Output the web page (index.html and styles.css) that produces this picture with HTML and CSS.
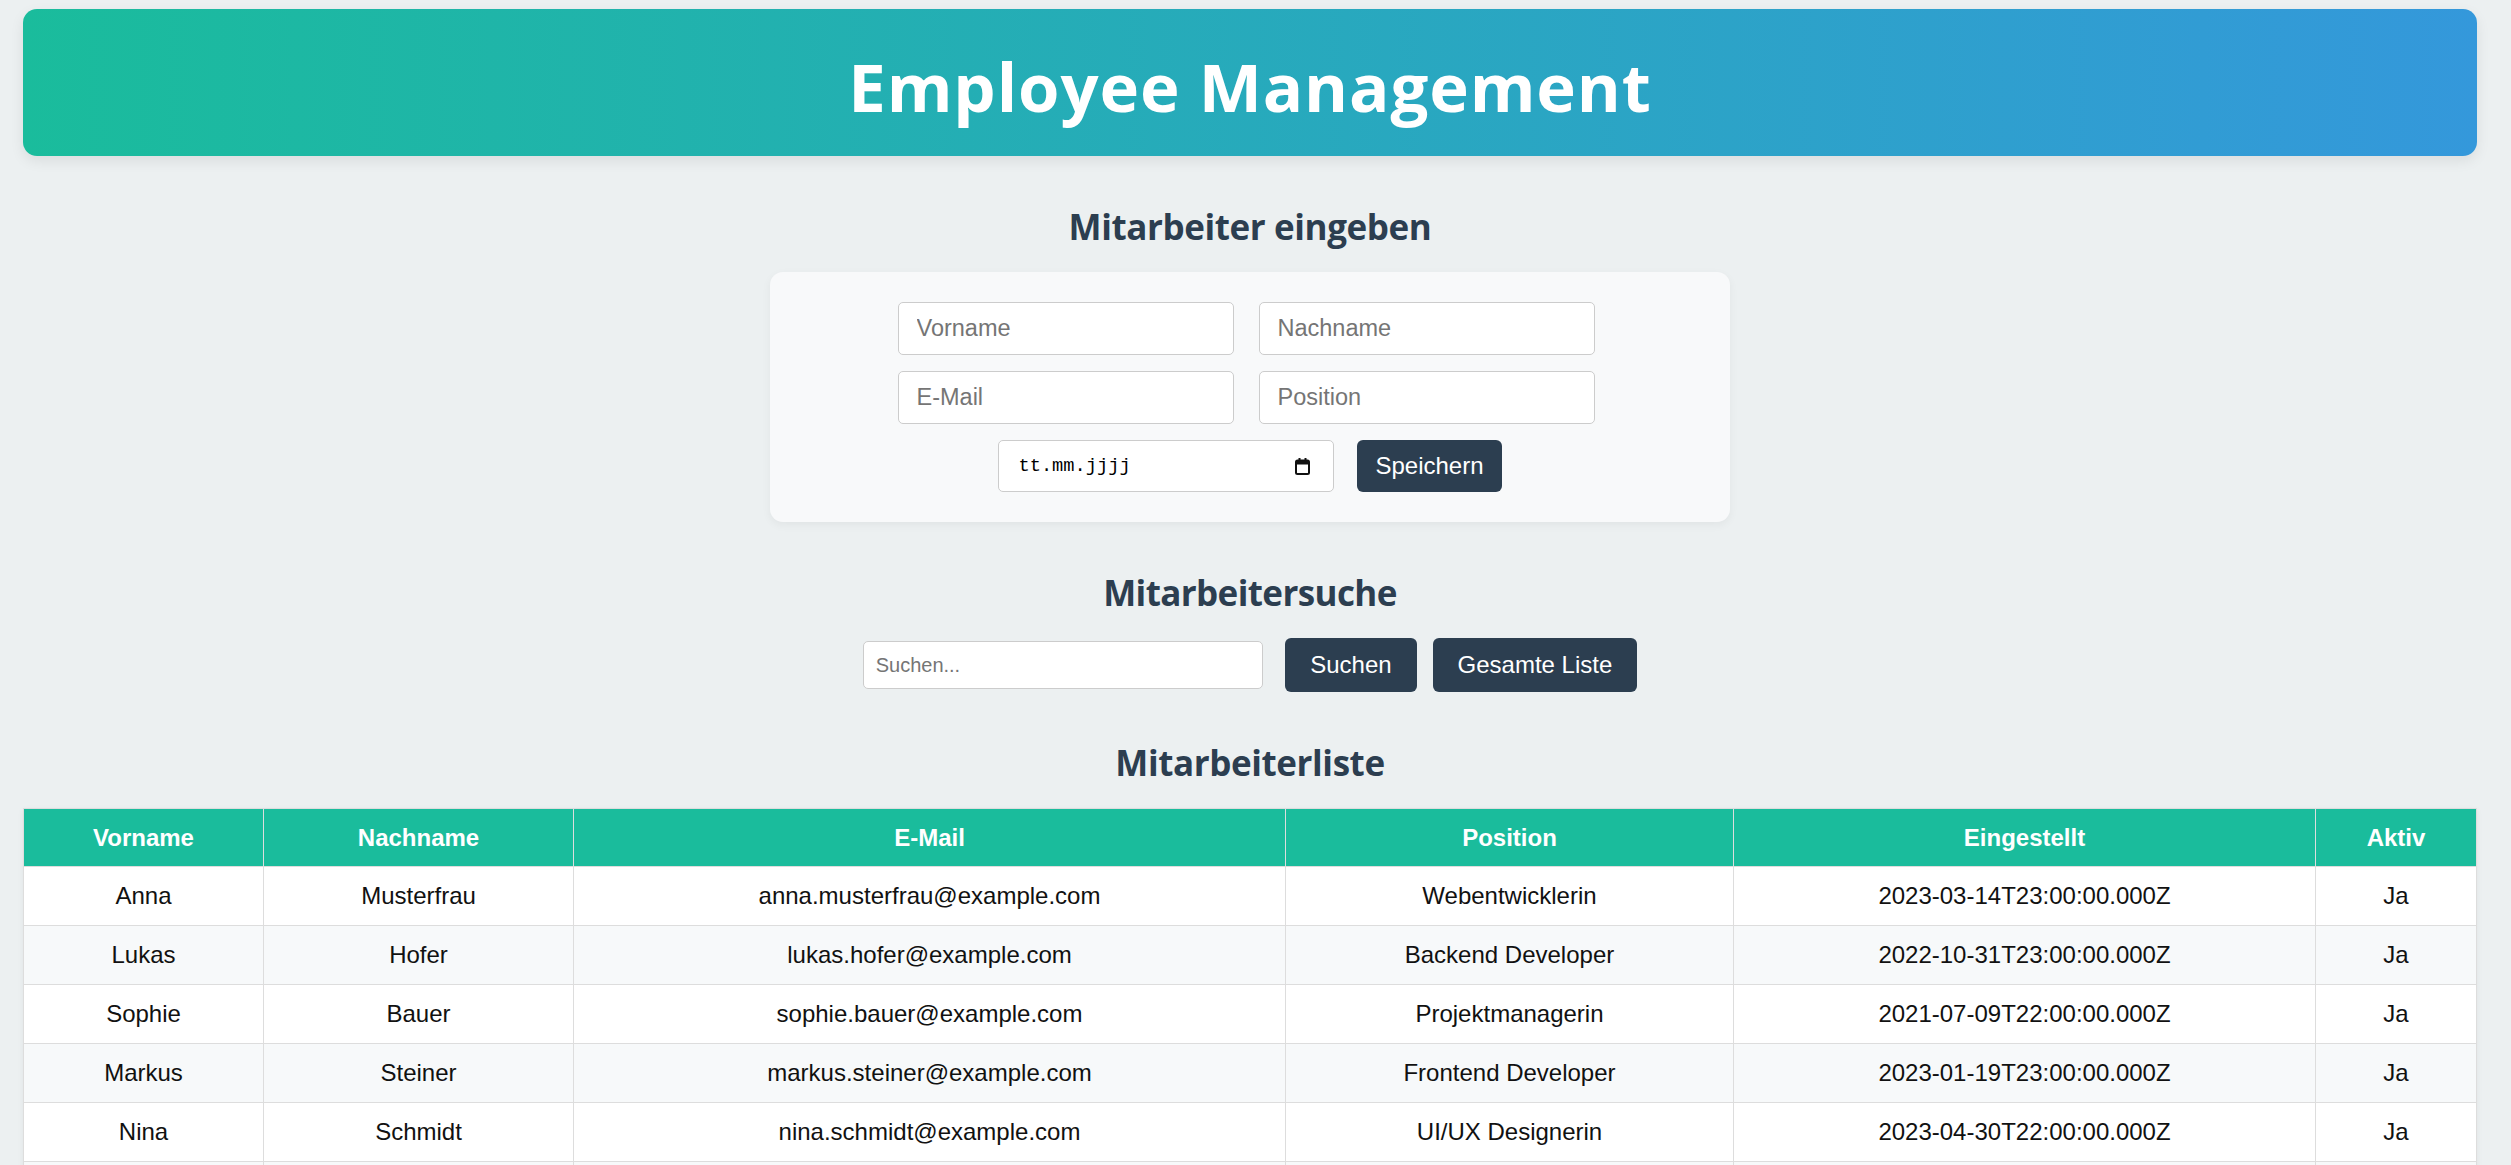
FILE: index.html
```html
<!DOCTYPE html>
<html lang="de">
<head>
<meta charset="utf-8">
<title>Employee Management</title>
<link rel="stylesheet" href="styles.css">
</head>
<body>
<div class="app">
  <header class="banner">
    <h1 class="banner-title">Employee Management</h1>
  </header>

  <section class="section">
    <h2 class="section-title">Mitarbeiter eingeben</h2>
    <form class="card">
      <div class="form-row form-row--pair">
        <input class="field" type="text" placeholder="Vorname">
        <input class="field" type="text" placeholder="Nachname">
      </div>
      <div class="form-row form-row--pair">
        <input class="field" type="text" placeholder="E-Mail">
        <input class="field" type="text" placeholder="Position">
      </div>
      <div class="form-row">
        <div class="date-field">
          <span class="date-text">tt.mm.jjjj</span>
          <svg class="date-icon" width="15" height="17" viewBox="0 0 15 17" aria-hidden="true">
            <rect x="1" y="2.5" width="13" height="13.5" rx="1.5" fill="none" stroke="#111" stroke-width="2"/>
            <rect x="1" y="2.5" width="13" height="4" fill="#111"/>
            <rect x="3.5" y="0" width="2" height="3" fill="#111"/>
            <rect x="9.5" y="0" width="2" height="3" fill="#111"/>
          </svg>
        </div>
        <button class="btn btn--save" type="button">Speichern</button>
      </div>
    </form>
  </section>

  <section class="section">
    <h2 class="section-title section-title--search">Mitarbeitersuche</h2>
    <div class="search-row">
      <input class="field field--search" type="text" placeholder="Suchen...">
      <button class="btn btn--search" type="button">Suchen</button>
      <button class="btn btn--search" type="button">Gesamte Liste</button>
    </div>
  </section>

  <section class="section">
    <h2 class="section-title section-title--list">Mitarbeiterliste</h2>
    <table class="staff-table">
      <colgroup>
        <col class="col-first">
        <col class="col-last">
        <col class="col-mail">
        <col class="col-pos">
        <col class="col-date">
        <col class="col-active">
      </colgroup>
      <thead>
        <tr><th>Vorname</th><th>Nachname</th><th>E-Mail</th><th>Position</th><th>Eingestellt</th><th>Aktiv</th></tr>
      </thead>
      <tbody>
        <tr><td>Anna</td><td>Musterfrau</td><td>anna.musterfrau@example.com</td><td>Webentwicklerin</td><td>2023-03-14T23:00:00.000Z</td><td>Ja</td></tr>
        <tr><td>Lukas</td><td>Hofer</td><td>lukas.hofer@example.com</td><td>Backend Developer</td><td>2022-10-31T23:00:00.000Z</td><td>Ja</td></tr>
        <tr><td>Sophie</td><td>Bauer</td><td>sophie.bauer@example.com</td><td>Projektmanagerin</td><td>2021-07-09T22:00:00.000Z</td><td>Ja</td></tr>
        <tr><td>Markus</td><td>Steiner</td><td>markus.steiner@example.com</td><td>Frontend Developer</td><td>2023-01-19T23:00:00.000Z</td><td>Ja</td></tr>
        <tr><td>Nina</td><td>Schmidt</td><td>nina.schmidt@example.com</td><td>UI/UX Designerin</td><td>2023-04-30T22:00:00.000Z</td><td>Ja</td></tr>
        <tr class="row-empty"><td></td><td></td><td></td><td></td><td></td><td></td></tr>
      </tbody>
    </table>
  </section>
</div>
</body>
</html>
```

FILE: styles.css
```css
html {
  overflow: hidden;
}

body {
  margin: 0;
  background: #ecf0f1;
  font-family: "Liberation Sans", Arial, sans-serif;
  color: #111;
}

.app {
  padding: 9px 34px 40px 23px;
}

.banner {
  background: linear-gradient(90deg, #1abc9c 0%, #3498db 100%);
  border-radius: 14px;
  box-shadow: 0 5px 14px rgba(0, 0, 0, 0.08);
  padding: 44px 0 36px;
  text-align: center;
}

.banner-title {
  margin: 0;
  font-family: "Open Sans", "Noto Sans", sans-serif;
  font-weight: 700;
  font-size: 67px;
  line-height: 67px;
  letter-spacing: 0.9px;
  color: #ffffff;
}

.section {
  display: flex;
  flex-direction: column;
  align-items: center;
}

.section-title {
  margin: 52.5px 0 28.5px;
  font-family: "Open Sans", "Noto Sans", sans-serif;
  font-weight: 700;
  font-size: 35px;
  line-height: 35px;
  letter-spacing: -0.4px;
  color: #2c3e50;
}

.section-title--search {
  letter-spacing: -0.6px;
}

.card {
  width: 960px;
  box-sizing: border-box;
  padding: 30px 0;
  background: #f8f9fa;
  border-radius: 13px;
  box-shadow: 0 3px 10px rgba(0, 0, 0, 0.05);
  display: flex;
  flex-direction: column;
  gap: 16px;
}

.form-row {
  display: flex;
  justify-content: center;
  align-items: center;
  gap: 23px;
}

.form-row--pair {
  gap: 25px;
  padding-right: 8px;
}

.field {
  width: 336px;
  height: 53px;
  box-sizing: border-box;
  padding: 0 18px;
  border: 1px solid #cccccc;
  border-radius: 5px;
  background: #ffffff;
  font-family: "Liberation Sans", Arial, sans-serif;
  font-size: 23.5px;
  color: #111;
  outline: none;
}

.field::placeholder {
  color: #757575;
}

.date-field {
  width: 336px;
  height: 52px;
  box-sizing: border-box;
  padding: 0 23px 0 19px;
  border: 1px solid #cccccc;
  border-radius: 5px;
  background: #ffffff;
  display: flex;
  align-items: center;
  justify-content: space-between;
}

.date-text {
  font-family: "Liberation Mono", "DejaVu Sans Mono", monospace;
  font-size: 18.7px;
  color: #000;
}

.date-icon {
  display: block;
}

.btn {
  border: none;
  border-radius: 6px;
  background: #2c3e50;
  color: #ffffff;
  font-family: "Liberation Sans", Arial, sans-serif;
  font-size: 24px;
  cursor: pointer;
}

.btn--save {
  height: 52px;
  padding: 0 18px;
}

.search-row {
  display: flex;
  align-items: center;
  gap: 16px;
}

.field--search {
  width: 400px;
  height: 48px;
  padding: 0 12px;
  font-size: 20px;
  margin-right: 6.5px;
}

.btn--search {
  height: 54px;
  padding: 0 25px;
}

.section-title--list {
  margin-bottom: 28.5px;
}

.staff-table {
  width: 2453px;
  table-layout: fixed;
  border-collapse: collapse;
  background: #ffffff;
  box-shadow: 0 2px 6px rgba(0, 0, 0, 0.06);
  font-size: 24px;
}

.col-first { width: 240px; }
.col-last { width: 310px; }
.col-mail { width: 712px; }
.col-pos { width: 448px; }
.col-date { width: 582px; }
.col-active { width: 161px; }

.staff-table th,
.staff-table td {
  border: 1px solid #dddddd;
  text-align: center;
  line-height: 28px;
  white-space: nowrap;
}

.staff-table th {
  background: #1abc9c;
  color: #ffffff;
  font-weight: 700;
  padding: 14.5px 10px;
}

.staff-table td {
  padding: 15px 10px;
  color: #111;
}

.staff-table tbody tr:nth-child(even) td {
  background: #f7f9fa;
}

.row-empty {
  height: 59px;
}
```
